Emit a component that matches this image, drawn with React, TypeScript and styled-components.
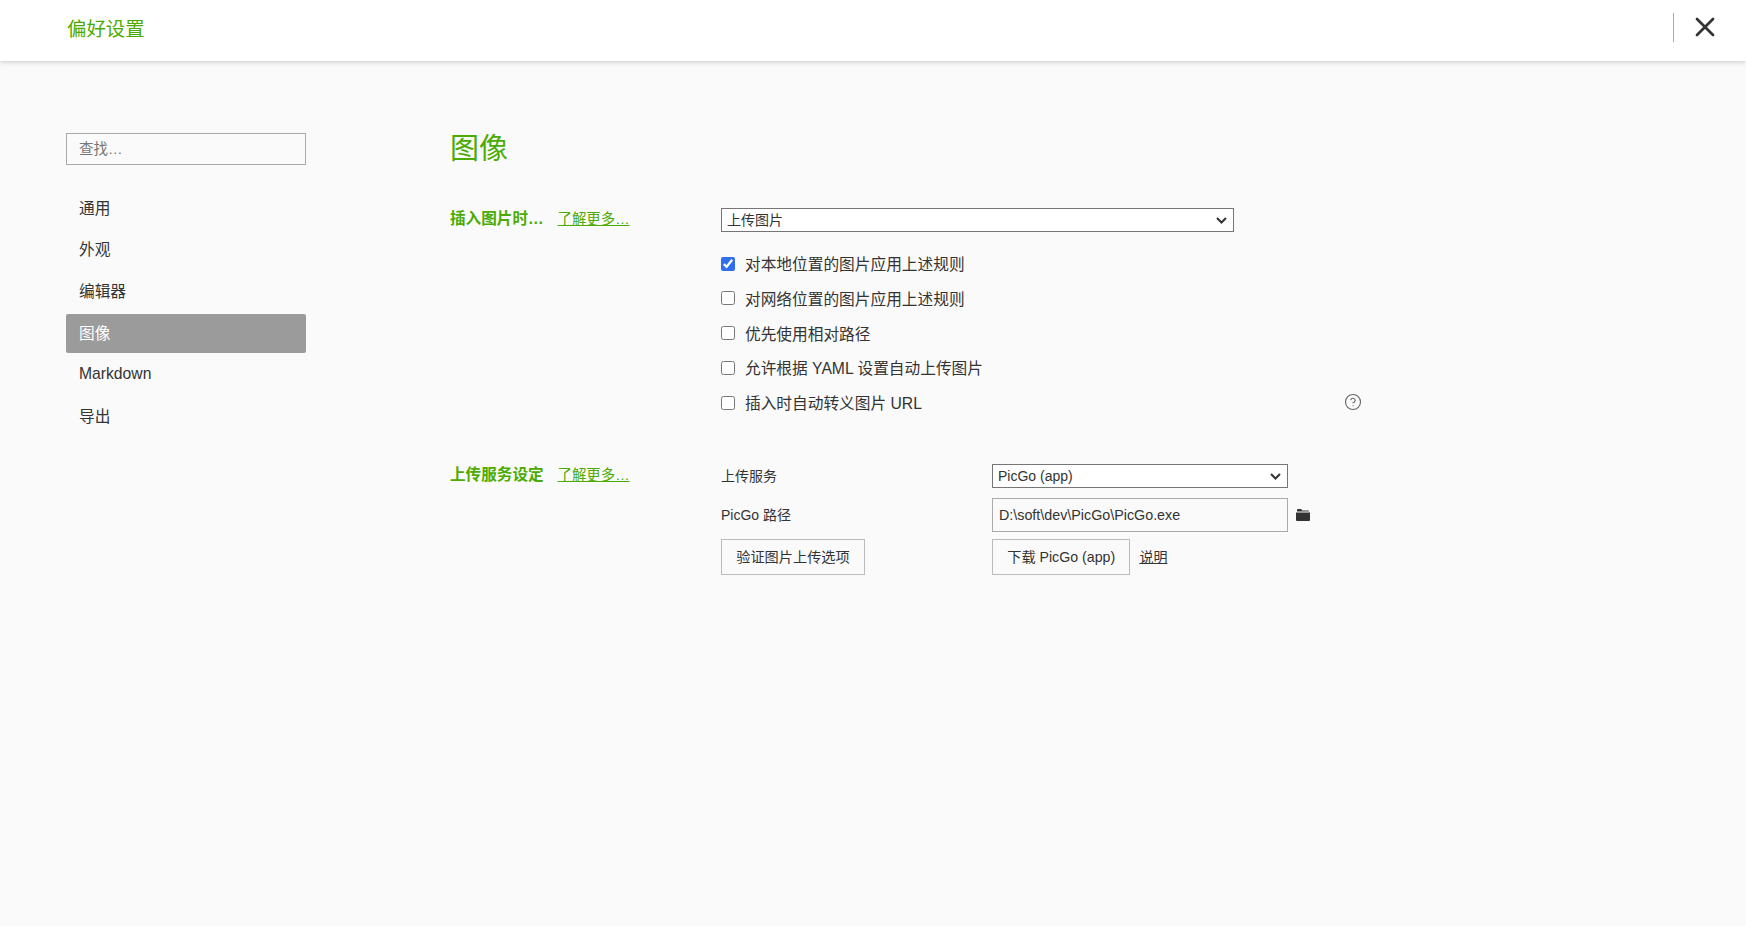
import { FC } from 'react';
import styled, { createGlobalStyle } from 'styled-components';
import { CircleHelp, X } from 'lucide-react';

const FONT = '"Liberation Sans", "Noto Sans CJK SC", sans-serif';
const GREEN = '#4cab00';
const CHEVRON =
  "url(\"data:image/svg+xml,%3Csvg xmlns='http://www.w3.org/2000/svg' width='11' height='7' fill='none' stroke='%23333' stroke-width='2'%3E%3Cpath d='M1 1l4.5 4.5L10 1'/%3E%3C/svg%3E\")";

const GlobalStyle = createGlobalStyle`
  html, body {
    margin: 0;
    height: 100%;
    background: #fafafa;
    font-family: ${FONT};
    color: #333;
  }
`;

const navItems = ['通用', '外观', '编辑器', '图像', 'Markdown', '导出'];

const imageOptions = [
  { label: '对本地位置的图片应用上述规则', checked: true },
  { label: '对网络位置的图片应用上述规则', checked: false },
  { label: '优先使用相对路径', checked: false },
  { label: '允许根据 YAML 设置自动上传图片', checked: false },
  { label: '插入时自动转义图片 URL', checked: false, help: true },
];

const FolderIcon: FC = () => (
  <svg width="14" height="12" viewBox="0 0 14 12" fill="#333">
    <path d="M1 2.6V1a1 1 0 0 1 1-1h3l1.4 1.4H12a1 1 0 0 1 1 1v.2Z" />
    <path d="M0 3.6h14V11a1 1 0 0 1-1 1H1a1 1 0 0 1-1-1Z" />
  </svg>
);

const App: FC = () => {
  return (
    <PageSC>
      <GlobalStyle />
      <HeaderSC>
        <TitleSC>偏好设置</TitleSC>
        <CloseAreaSC>
          <X size={32} strokeWidth={2} color="#333" />
        </CloseAreaSC>
      </HeaderSC>
      <BodySC>
        <SidebarSC>
          <SearchSC placeholder="查找…" />
          <NavSC>
            {navItems.map(item => (
              <NavItemSC key={item} $active={item === '图像'}>
                {item}
              </NavItemSC>
            ))}
          </NavSC>
        </SidebarSC>
        <ContentSC>
          <HeadingSC>图像</HeadingSC>
          <SectionSC>
            <SectionTitleSC>
              <strong>插入图片时…</strong>
              <MoreLinkSC>了解更多…</MoreLinkSC>
            </SectionTitleSC>
            <SectionBodySC>
              <SelectSC $width={513} defaultValue="upload">
                <option value="upload">上传图片</option>
              </SelectSC>
              <CheckListSC>
                {imageOptions.map(option => (
                  <CheckRowSC key={option.label}>
                    <CheckboxSC type="checkbox" defaultChecked={option.checked} />
                    <span>{option.label}</span>
                    {option.help && (
                      <HelpIconSC>
                        <CircleHelp size={18} strokeWidth={1.5} color="#666" />
                      </HelpIconSC>
                    )}
                  </CheckRowSC>
                ))}
              </CheckListSC>
            </SectionBodySC>
          </SectionSC>
          <ServiceSectionSC>
            <SectionTitleSC>
              <strong>上传服务设定</strong>
              <MoreLinkSC>了解更多…</MoreLinkSC>
            </SectionTitleSC>
            <ServiceGridSC>
              <FieldLabelSC>上传服务</FieldLabelSC>
              <SelectSC $width={296} defaultValue="picgo">
                <option value="picgo">PicGo (app)</option>
              </SelectSC>
              <FieldLabelSC>PicGo 路径</FieldLabelSC>
              <PathRowSC>
                <PathInputSC defaultValue="D:\soft\dev\PicGo\PicGo.exe" />
                <FolderIcon />
              </PathRowSC>
              <ActionCellSC>
                <ButtonSC>验证图片上传选项</ButtonSC>
              </ActionCellSC>
              <ActionCellSC>
                <ButtonSC>下载 PicGo (app)</ButtonSC>
                <HelpLinkSC>说明</HelpLinkSC>
              </ActionCellSC>
            </ServiceGridSC>
          </ServiceSectionSC>
        </ContentSC>
      </BodySC>
    </PageSC>
  );
};

export default App;

const PageSC = styled('div')`
  min-height: 926px;
  background: #fafafa;
`;
const HeaderSC = styled('header')`
  height: 61px;
  padding-left: 67px;
  display: flex;
  align-items: center;
  justify-content: space-between;
  background: #fff;
  box-shadow: 0 1px 5px rgba(0, 0, 0, 0.2);
  box-sizing: border-box;
`;
const TitleSC = styled('div')`
  font-size: 19.4px;
  color: ${GREEN};
  margin-top: -7px;
`;
const CloseAreaSC = styled('div')`
  width: 73px;
  height: 29px;
  margin-top: -7px;
  padding-left: 15px;
  border-left: 1px solid #aaa;
  display: flex;
  align-items: center;
  box-sizing: border-box;
`;
const BodySC = styled('div')`
  display: flex;
  padding: 72px 0 0 66px;
`;
const SidebarSC = styled('aside')`
  width: 240px;
  flex: none;
`;
const SearchSC = styled('input')`
  width: 100%;
  height: 32px;
  padding: 0 12px;
  box-sizing: border-box;
  border: 1px solid #aaa;
  border-radius: 0;
  background: transparent;
  font: 14.5px ${FONT};
  outline: none;
  &::placeholder {
    color: #777;
  }
`;
const NavSC = styled('nav')`
  margin-top: 24px;
  display: flex;
  flex-direction: column;
  gap: 2.8px;
`;
const NavItemSC = styled('div')<{ $active: boolean }>`
  height: 39px;
  padding: 0 13px 3px;
  box-sizing: border-box;
  display: flex;
  align-items: center;
  font-size: 15.7px;
  border-radius: 2px;
  color: ${p => (p.$active ? '#fff' : '#333')};
  background: ${p => (p.$active ? '#9b9b9b' : 'transparent')};
`;
const ContentSC = styled('main')`
  margin-left: 144px;
  flex: 1;
`;
const HeadingSC = styled('h1')`
  margin: 0;
  height: 32px;
  line-height: 32px;
  font-size: 29px;
  font-weight: 400;
  color: ${GREEN};
`;
const SectionSC = styled('section')`
  margin-top: 43px;
  display: flex;
`;
const ServiceSectionSC = styled(SectionSC)`
  margin-top: 49px;
`;
const SectionTitleSC = styled('div')`
  width: 271px;
  flex: none;
  display: flex;
  gap: 14px;
  align-items: flex-start;
  height: 24px;
  line-height: 22px;
  font-size: 15.6px;
  color: ${GREEN};
  strong {
    font-weight: 700;
  }
`;
const MoreLinkSC = styled('a')`
  font-size: 14.4px;
  color: ${GREEN};
  text-decoration: underline;
`;
const SectionBodySC = styled('div')`
  display: flex;
  flex-direction: column;
`;
const SelectSC = styled('select')<{ $width: number }>`
  appearance: none;
  width: ${p => p.$width}px;
  height: 24px;
  border: 1px solid #767676;
  border-radius: 0;
  background: #fff ${CHEVRON} no-repeat right 6px center;
  color: #333;
  font: 14px ${FONT};
  padding: 0 5px;
  box-sizing: border-box;
  outline: none;
`;
const CheckListSC = styled('div')`
  margin-top: 19px;
  display: flex;
  flex-direction: column;
  gap: 9.8px;
`;
const CheckRowSC = styled('label')`
  height: 25px;
  display: flex;
  align-items: center;
  gap: 10px;
  font-size: 15.7px;
  position: relative;
  width: 640px;
`;
const CheckboxSC = styled('input')`
  width: 14px;
  height: 14px;
  margin: 0;
  accent-color: #2f6fef;
`;
const HelpIconSC = styled('span')`
  position: absolute;
  left: 623px;
  top: 3px;
  display: flex;
`;
const ServiceGridSC = styled('div')`
  display: grid;
  grid-template-columns: 271px 1fr;
  grid-template-rows: 24px 34px 36px;
  row-gap: 10px;
  align-items: center;
`;
const FieldLabelSC = styled('div')`
  font-size: 14px;
  color: #333;
  margin-top: -2px;
`;
const PathRowSC = styled('div')`
  display: flex;
  align-items: center;
  gap: 8px;
`;
const ActionCellSC = styled(PathRowSC)`
  margin-top: -7px;
`;
const PathInputSC = styled('input')`
  width: 296px;
  height: 34px;
  padding: 0 6px;
  box-sizing: border-box;
  border: 1px solid #aaa;
  border-radius: 0;
  background: transparent;
  color: #333;
  font: 14.3px ${FONT};
  outline: none;
`;
const ButtonSC = styled('button')`
  height: 36px;
  padding: 0 14.2px 2px;
  box-sizing: border-box;
  border: 1px solid #bbb;
  border-radius: 0;
  background: transparent;
  color: #333;
  font: 14.2px ${FONT};
`;
const HelpLinkSC = styled('a')`
  font-size: 14px;
  color: #333;
  text-decoration: underline;
  margin: -2px 0 0 1px;
`;
